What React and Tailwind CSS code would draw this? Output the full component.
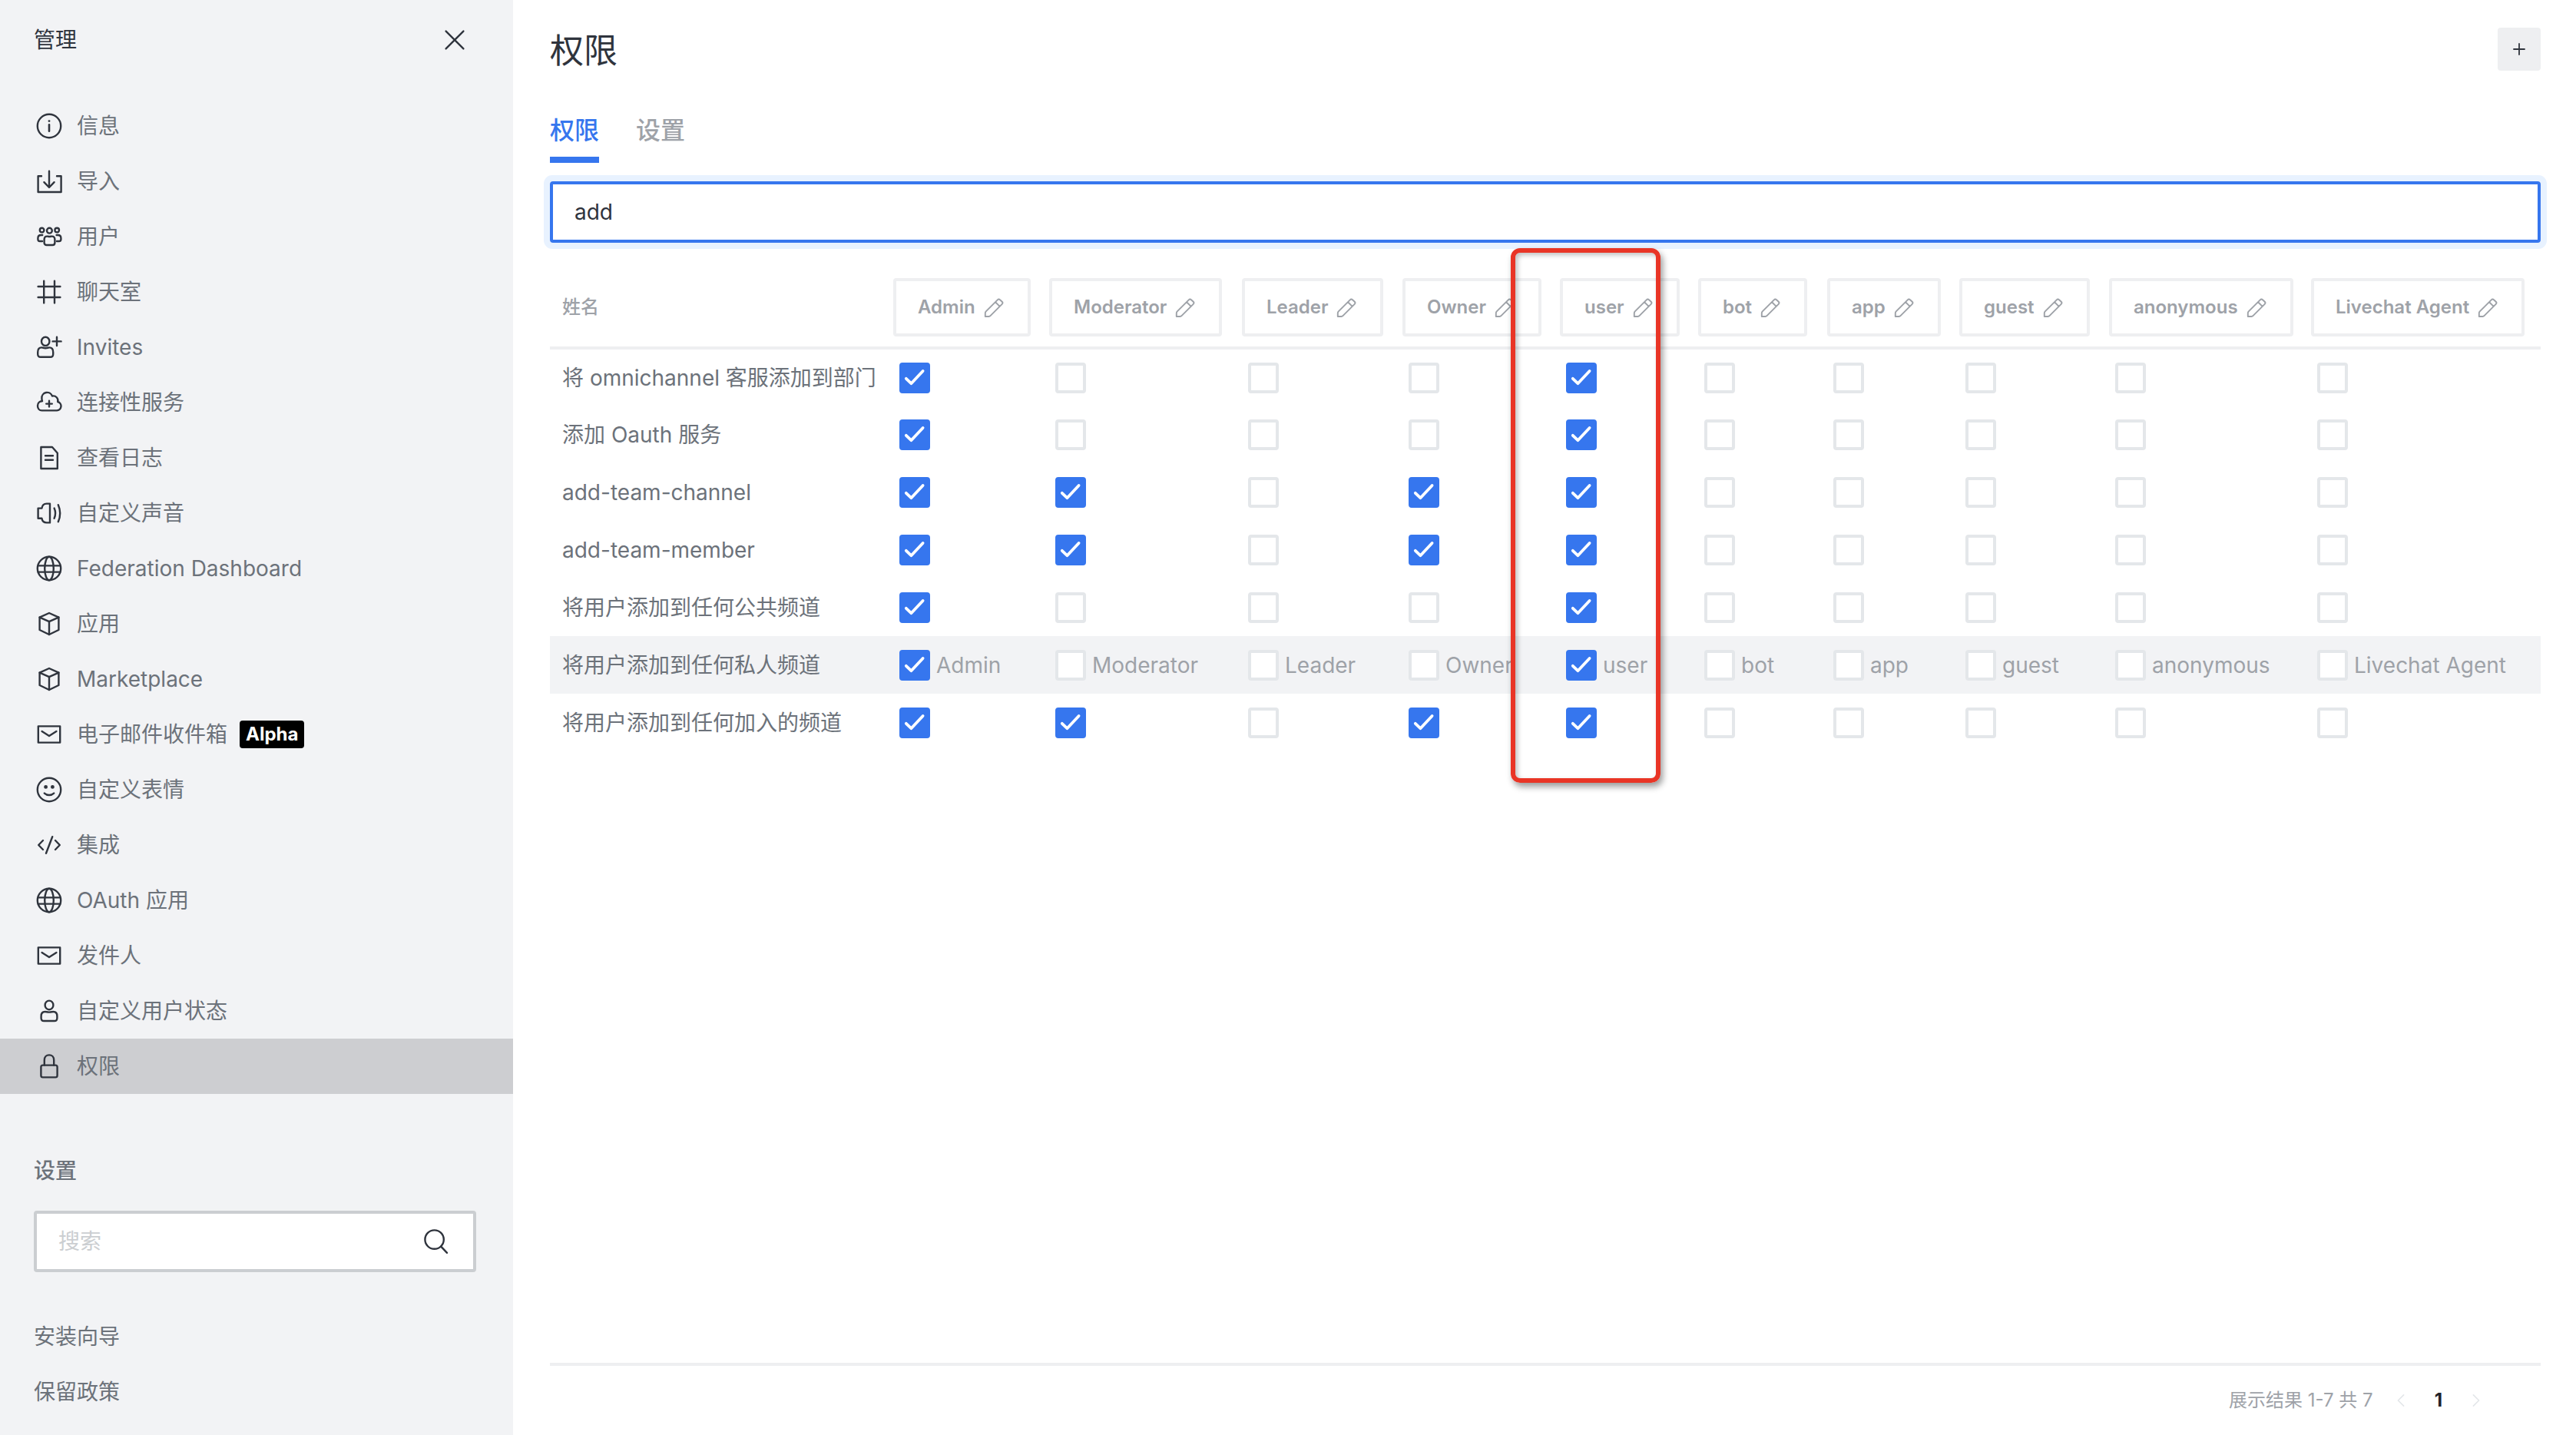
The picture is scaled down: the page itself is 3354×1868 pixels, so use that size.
import { useState } from "react";

const icons = {
  info: (
    <>
      <circle cx="10" cy="10" r="7.6" />
      <path d="M10 9.2V13.4" strokeWidth="1.3" />
      <circle cx="10" cy="6.8" r="0.7" fill="currentColor" stroke="none" />
    </>
  ),
  import: (
    <>
      <path d="M5 6.6H2.8V17H17.8V6.6H15" />
      <path d="M10 3.4V13.6M6.7 10.6L10 14L13.3 10.6" />
    </>
  ),
  team: (
    <>
      <circle cx="5.3" cy="5.8" r="1.4" />
      <circle cx="10.2" cy="6.1" r="1.7" />
      <circle cx="15.1" cy="5.8" r="1.4" />
      <path d="M6.8 12c0-1.4.7-2.2 1.8-2.2.6 0 .9.2 1.6.2s1-.2 1.6-.2c1.1 0 1.9.8 1.9 2.2v2c0 .9-.6 1.5-1.5 1.5H8.3c-.9 0-1.5-.6-1.5-1.5z" />
      <path d="M5.6 9H4.7C3.4 9 2.7 9.8 2.7 11v.8c0 .7.5 1.2 1.2 1.2H5.5M14.8 9h.9c1.3 0 2 .8 2 2v.8c0 .7-.5 1.2-1.2 1.2H15" />
    </>
  ),
  hash: <path d="M6.6 2.8V17.2M13.5 2.8V17.2M2.8 6.5H17.2M2.8 13.5H17.2" />,
  userPlus: (
    <>
      <ellipse cx="7.6" cy="6.2" rx="2.6" ry="2.8" />
      <path d="M2.6 13.2c0-1.9 1-3 2.5-3 .9 0 1.3.4 2.5.4s1.6-.4 2.5-.4c1.5 0 2.5 1.1 2.5 3v1.3c0 1.2-.7 1.9-1.8 1.9H4.4c-1.1 0-1.8-.7-1.8-1.9z" />
      <path d="M15 3.4V9M12.3 6.2H17.8" />
    </>
  ),
  cloudPlus: (
    <>
      <path d="M5.2 15.2H15a2.9 2.9 0 0 0 .6-5.7 3 3 0 0 0-3.6-3.7A3.5 3.5 0 0 0 5.2 7.2c0 .8.1 1.3.3 1.9-1.7-.1-3 1.2-3 3s1.2 3.1 2.7 3.1z" />
      <path d="M10 8.9v3.8M8.1 10.8h3.8" />
    </>
  ),
  file: (
    <>
      <path d="M4.7 3H12L15.4 6.9V17H4.7Z" />
      <path d="M7.5 8.6H12.5M7.5 11.4H12.5" />
    </>
  ),
  volume: (
    <>
      <path d="M2.8 6.8H5.2C5.5 4.8 6.5 3.8 8.4 3.8H10.5V16.2H8.4C6.5 16.2 5.500 15.200 5.200 13.400H2.800Z" />
      <path d="M13.300 6.800C14.200 8.800 14.200 11.400 13.300 13.400M15.900 4.600C17.400 8 17.400 12.200 15.900 15.600" />
    </>
  ),
  globe: (
    <>
      <circle cx="10" cy="10" r="7.6" />
      <ellipse cx="10" cy="10" rx="2.9" ry="7.6" />
      <path d="M2.800 8.200H17.200M2.800 12.300H17.200" />
    </>
  ),
  cube: (
    <>
      <path d="M10 3L16.200 5.800V14L10 17L3.800 14V5.800Z" />
      <path d="M3.800 5.800L10 8.600L16.200 5.800M10 8.600V17" />
    </>
  ),
  mail: (
    <>
      <path d="M2.900 4.700H17.100V15.300H2.900Z" />
      <path d="M5.300 8L10 11L14.700 8" />
    </>
  ),
  emoji: (
    <>
      <circle cx="10" cy="10" r="7.600" />
      <circle cx="7.800" cy="8.200" r="1.200" fill="currentColor" stroke="none" />
      <circle cx="12.200" cy="8.200" r="1.200" fill="currentColor" stroke="none" />
      <path d="M6.900 12.300C8.600 13.900 11.400 13.900 13.100 12.300" />
    </>
  ),
  code: <path d="M6 7L3.100 10L6 13M14 7L16.900 10L14 13M12.100 4.600L8 15.400" />,
  user: (
    <>
      <ellipse cx="10" cy="6.200" rx="2.700" ry="2.900" />
      <path d="M4.800 13.400c0-1.900 1-2.900 2.500-2.900.9 0 1.400.3 2.700.3s1.800-.3 2.700-.3c1.500 0 2.500 1 2.500 2.900v1.200c0 1.200-.7 1.900-1.800 1.900H6.600c-1.100 0-1.800-.7-1.800-1.900z" />
    </>
  ),
  lock: (
    <>
      <path d="M5.900 9.300H14.100C14.900 9.300 15.300 9.800 15.300 10.500V16C15.300 16.800 14.900 17.200 14.100 17.200H5.900C5.100 17.200 4.700 16.800 4.700 16V10.500C4.700 9.800 5.100 9.300 5.900 9.300Z" />
      <path d="M6.900 9.300V6C6.900 4 8.200 2.700 10 2.700S13.100 4 13.100 6V9.300" />
    </>
  ),
  close: <path d="M4.300 4.300L15.700 15.700M15.700 4.300L4.300 15.700" />,
  search: (
    <>
      <circle cx="8.800" cy="8.800" r="6.100" />
      <path d="M13.100 13.300L17 17.400" />
    </>
  ),
  pencil: (
    <path d="M3 17.500V14.800C3 14.200 3.200 13.800 3.600 13.400L13 4C13.600 3.300 14.400 3.300 15 3.900L16.700 5.500C17.300 6.100 17.300 6.800 16.700 7.400L7.300 16.800C6.900 17.300 6.500 17.500 5.900 17.500ZM11.300 5.800L14.800 9.300" />
  ),
  plus: <path d="M10 3V17M3 10H17" />,
  left: <path d="M13 4L7 10L13 16" />,
  right: <path d="M7 4L13 10L7 16" />,
};

function Icon({ name, className, stroke = 1.2 }) {
  return (
    <svg
      viewBox="0 0 20 20"
      className={className}
      fill="none"
      stroke="currentColor"
      strokeWidth={stroke}
      strokeLinecap="round"
      strokeLinejoin="round"
      aria-hidden="true"
    >
      {icons[name]}
    </svg>
  );
}

const nav = [
  ["info", "信息"],
  ["import", "导入"],
  ["team", "用户"],
  ["hash", "聊天室"],
  ["userPlus", "Invites"],
  ["cloudPlus", "连接性服务"],
  ["file", "查看日志"],
  ["volume", "自定义声音"],
  ["globe", "Federation Dashboard"],
  ["cube", "应用"],
  ["cube", "Marketplace"],
  ["mail", "电子邮件收件箱", "Alpha"],
  ["emoji", "自定义表情"],
  ["code", "集成"],
  ["globe", "OAuth 应用"],
  ["mail", "发件人"],
  ["user", "自定义用户状态"],
  ["lock", "权限"],
];

const roles = [
  { name: "Admin", col: "w-[203px]" },
  { name: "Moderator", col: "w-[251px]" },
  { name: "Leader", col: "w-[209px]" },
  { name: "Owner", col: "w-[205px]" },
  { name: "user", col: "w-[180px]" },
  { name: "bot", col: "w-[168px]" },
  { name: "app", col: "w-[172px]" },
  { name: "guest", col: "w-[195px]" },
  { name: "anonymous", col: "w-[263px]" },
  { name: "Livechat Agent", col: "w-[311px]" },
];

const permissions = [
  { name: "将 omnichannel 客服添加到部门", granted: ["Admin", "user"] },
  { name: "添加 Oauth 服务", granted: ["Admin", "user"] },
  { name: "add-team-channel", granted: ["Admin", "Moderator", "Owner", "user"] },
  { name: "add-team-member", granted: ["Admin", "Moderator", "Owner", "user"] },
  { name: "将用户添加到任何公共频道", granted: ["Admin", "user"] },
  { name: "将用户添加到任何私人频道", granted: ["Admin", "user"], hovered: true },
  { name: "将用户添加到任何加入的频道", granted: ["Admin", "Moderator", "Owner", "user"] },
];

function CheckBox({ checked, label, showLabel }) {
  const [on, setOn] = useState(checked);
  return (
    <label className="flex items-center gap-2 whitespace-nowrap text-[#9ea2a8]">
      <span className="relative flex size-10 shrink-0">
        <input
          type="checkbox"
          checked={on}
          onChange={() => setOn(!on)}
          aria-label={label}
          className="size-10 appearance-none rounded-sm border-4 border-[#e4e7ea] bg-white checked:border-[#3676ee] checked:bg-[#3676ee]"
        />
        {on && (
          <svg
            viewBox="0 0 20 20"
            className="pointer-events-none absolute inset-0 size-10 text-white"
            fill="none"
            stroke="currentColor"
            strokeWidth="1.9"
            strokeLinecap="round"
            strokeLinejoin="round"
            aria-hidden="true"
          >
            <path d="M4.400 10.400L7.700 13.600L15.300 5.500" />
          </svg>
        )}
      </span>
      {showLabel && <span>{label}</span>}
    </label>
  );
}

function Sidebar() {
  return (
    <aside className="flex w-[668px] shrink-0 flex-col bg-[#f2f3f5] text-[#6c727a]">
      <header className="flex h-[104px] items-center justify-between pr-14 pl-11">
        <h2 className="text-[#2f343d]">管理</h2>
        <button type="button" aria-label="关闭" className="text-[#2f343d]">
          <Icon name="close" className="size-10" />
        </button>
      </header>
      <nav className="mt-6 flex flex-col">
        {nav.map(([icon, label, badge], i) => (
          <a
            key={label}
            href="#"
            className={
              i === nav.length - 1
                ? "flex h-18 items-center gap-4 bg-[#cdced1] pl-11"
                : "flex h-18 items-center gap-4 pl-11"
            }
          >
            <Icon name={icon} className="size-10 text-[#2f343d]" />
            <span>{label}</span>
            {badge && (
              <span className="rounded-sm bg-black px-2 text-2xl leading-9 font-bold text-white">
                {badge}
              </span>
            )}
          </a>
        ))}
      </nav>
      <section className="mt-20 flex flex-col pr-12 pl-11">
        <h3 className="leading-10 font-medium">设置</h3>
        <div className="mt-8 flex h-20 items-center rounded-sm border-4 border-[#cbced1] bg-white pr-7 pl-7">
          <input
            type="text"
            aria-label="搜索"
            placeholder="搜索"
            className="min-w-0 flex-1 outline-none placeholder:text-[#cbced1]"
          />
          <Icon name="search" className="size-10 text-[#2f343d]" />
        </div>
      </section>
      <nav className="mt-12 flex flex-col">
        {["安装向导", "保留政策"].map((label) => (
          <a key={label} href="#" className="flex h-18 items-center pl-11">
            {label}
          </a>
        ))}
      </nav>
    </aside>
  );
}

function PermissionsTable() {
  return (
    <div className="relative">
      <table className="w-full table-fixed border-collapse text-left">
        <colgroup>
          <col className="w-[435px]" />
          {roles.map((r) => (
            <col key={r.name} className={r.col} />
          ))}
        </colgroup>
        <thead>
          <tr className="h-[105px] border-b-4 border-[#eeeff1] text-2xl font-semibold text-[#9ea2a8]">
            <th scope="col" className="px-4 font-medium">
              姓名
            </th>
            {roles.map((r) => (
              <th key={r.name} scope="col" className="px-3">
                <button
                  type="button"
                  className="flex h-[76px] items-center gap-2 rounded-sm border-4 border-[#eeeff1] px-7 font-semibold whitespace-nowrap"
                >
                  {r.name}
                  <Icon name="pencil" className="size-8" />
                </button>
              </th>
            ))}
          </tr>
        </thead>
        <tbody>
          {permissions.map((p) => (
            <tr
              key={p.name}
              className={p.hovered ? "h-[75px] bg-[#f2f3f5]" : "h-[75px]"}
            >
              <th
                scope="row"
                className="px-4 font-normal whitespace-nowrap text-[#6c727a]"
              >
                {p.name}
              </th>
              {roles.map((r) => (
                <td key={r.name} className="pl-5">
                  <CheckBox
                    checked={p.granted.includes(r.name)}
                    label={r.name}
                    showLabel={p.hovered}
                  />
                </td>
              ))}
            </tr>
          ))}
        </tbody>
      </table>
      <div className="pointer-events-none absolute -top-[25px] left-[1251px] h-[696px] w-[195px] rounded-xl border-6 border-[#e93526] shadow-[3px_5px_8px_rgba(0,0,0,0.4),inset_3px_3px_6px_rgba(0,0,0,0.25)]" />
    </div>
  );
}

export default function App() {
  const [query, setQuery] = useState("add");
  return (
    <div className="flex min-h-screen bg-white font-['Inter','Noto_Sans_CJK_SC',sans-serif] text-[28px] leading-10">
      <Sidebar />
      <main className="flex min-w-0 flex-1 flex-col pr-[46px] pl-12">
        <header className="flex h-32 items-center justify-between">
          <h1 className="pt-1 text-[44px] leading-16 text-[#2f343d]">权限</h1>
          <button
            type="button"
            aria-label="新建"
            className="flex size-14 items-center justify-center rounded-sm bg-[#eeeff1] text-[#2f343d]"
          >
            <Icon name="plus" className="size-5" stroke={1.8} />
          </button>
        </header>
        <div role="tablist" className="flex gap-12 text-[32px] font-medium">
          <button
            type="button"
            role="tab"
            aria-selected="true"
            className="h-[84px] border-b-8 border-[#3676ee] pt-2 text-[#3676ee]"
          >
            权限
          </button>
          <button
            type="button"
            role="tab"
            aria-selected="false"
            className="h-[84px] border-b-8 border-transparent pt-2 text-[#9ea2a8]"
          >
            设置
          </button>
        </div>
        <input
          type="text"
          aria-label="搜索权限"
          value={query}
          onChange={(e) => setQuery(e.target.value)}
          className="mt-6 mb-8 h-20 rounded-sm border-4 border-[#3676ee] px-7 text-[#2f343d] ring-8 ring-[#e8f2ff] outline-none"
        />
        <PermissionsTable />
        <footer className="mt-auto flex h-[94px] items-center justify-end border-t-4 border-[#eeeff1] pr-18 text-2xl text-[#9ea2a8]">
          <span>展示结果 1-7 共 7</span>
          <button type="button" disabled aria-label="上一页" className="ml-6 text-[#e4e7ea]">
            <Icon name="left" className="size-6" stroke={1.4} />
          </button>
          <button type="button" aria-current="page" className="mx-8 font-bold text-[#1f2329]">
            1
          </button>
          <button type="button" disabled aria-label="下一页" className="text-[#e4e7ea]">
            <Icon name="right" className="size-6" stroke={1.4} />
          </button>
        </footer>
      </main>
    </div>
  );
}
